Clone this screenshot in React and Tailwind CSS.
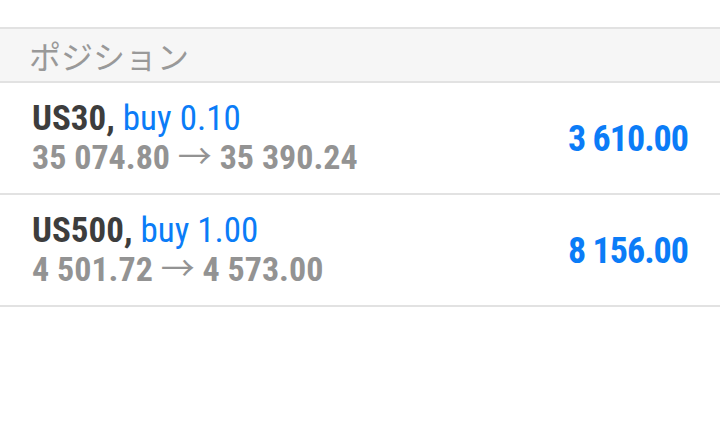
const positions = [
  { symbol: 'US30', side: 'buy 0.10', open: '35 074.80', current: '35 390.24', profit: '3 610.00' },
  { symbol: 'US500', side: 'buy 1.00', open: '4 501.72', current: '4 573.00', profit: '8 156.00' },
];

function PositionRow({ item }) {
  return (
    <div className="flex h-[112px] items-center justify-between border-b-2 border-[#e2e2e2] pl-[32px] pr-[32px]">
      <div className="flex flex-col">
        <div className="text-[35px] leading-[38px]">
          <span className="font-bold text-[#3d3d3d]">{item.symbol},</span>{' '}
          <span className="text-[#0b7cf7]">{item.side}</span>
        </div>
        <div className="text-[34px] font-bold leading-[38px] text-[#939393]">
          {item.open} <span className="font-normal">→</span> {item.current}
        </div>
      </div>
      <div className="pt-[2px] text-[36px] font-bold leading-none tracking-[-1px] text-[#0b7cf7]">{item.profit}</div>
    </div>
  );
}

export default function App() {
  return (
    <div
      className="h-[435px] w-[720px] overflow-hidden bg-white pt-[27px]"
      style={{ fontFamily: '"Roboto Condensed", Roboto, "Noto Sans CJK JP", sans-serif', fontStretch: 'condensed' }}
    >
      <div className="flex h-[56px] items-center border-y-2 border-[#e2e2e2] bg-[#f6f6f6] pl-[29px]">
        <span className="text-[32px] leading-none text-[#999999]" style={{ fontFamily: '"Noto Sans CJK JP", sans-serif' }}>
          ポジション
        </span>
      </div>
      {positions.map((item) => (
        <PositionRow key={item.symbol} item={item} />
      ))}
    </div>
  );
}
